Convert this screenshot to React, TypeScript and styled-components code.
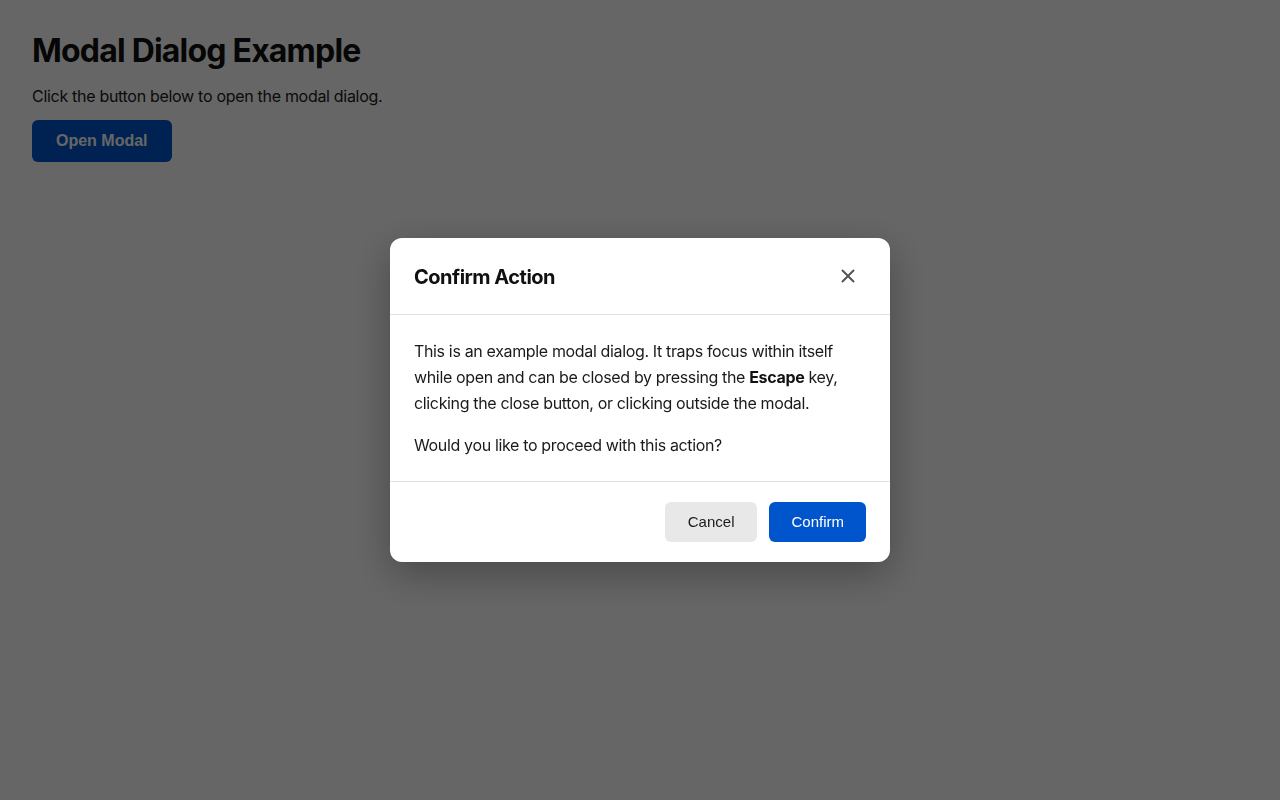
import React from "react";
import styled, { createGlobalStyle } from "styled-components";

const GlobalStyle = createGlobalStyle`
  html, body { margin: 0; padding: 0; background: #ffffff; }
  body { font-family: Inter, "Noto Sans", sans-serif; color: #111111; }
  * { box-sizing: border-box; }
`;

const Page = styled.main`
  padding: 32px;
  min-height: 800px;
`;

const Title = styled.h1`
  margin: 0 0 14px;
  font-size: 32px;
  line-height: 38px;
  font-weight: 700;
  letter-spacing: -0.8px;
  color: #111111;
`;

const Lead = styled.p`
  margin: 0 0 12px;
  font-size: 16px;
  line-height: 24px;
  letter-spacing: -0.3px;
  color: #1a1a1a;
`;

const PrimaryButton = styled.button<{ $size?: "lg" | "md" }>`
  border: none;
  border-radius: 6px;
  background: #0055cc;
  color: #ffffff;
  font-family: "Liberation Sans", Arial, sans-serif;
  cursor: pointer;
  font-size: ${(p) => (p.$size === "lg" ? "16px" : "15px")};
  font-weight: ${(p) => (p.$size === "lg" ? 700 : 400)};
  line-height: 18px;
  padding: ${(p) => (p.$size === "lg" ? "12px 24px" : "11px 22px")};
`;

const SecondaryButton = styled.button`
  border: none;
  border-radius: 6px;
  background: #e8e8e8;
  color: #1a1a1a;
  font-family: "Liberation Sans", Arial, sans-serif;
  font-size: 15px;
  line-height: 18px;
  padding: 11px 23px;
  cursor: pointer;
`;

const Overlay = styled.div`
  position: fixed;
  inset: 0;
  background: rgba(0, 0, 0, 0.6);
  display: flex;
  align-items: center;
  justify-content: center;
`;

const Dialog = styled.div`
  width: 500px;
  background: #ffffff;
  border-radius: 12px;
  box-shadow: 0 12px 40px rgba(0, 0, 0, 0.3);
  overflow: hidden;
`;

const Header = styled.header`
  display: flex;
  align-items: center;
  justify-content: space-between;
  padding: 20px 24px;
  border-bottom: 1px solid #e2e2e2;
`;

const DialogTitle = styled.h2`
  margin: 0;
  padding-top: 2px;
  font-size: 20px;
  line-height: 28px;
  font-weight: 700;
  letter-spacing: -0.5px;
  color: #111111;
`;

const CloseButton = styled.button`
  width: 36px;
  height: 36px;
  border: none;
  background: transparent;
  border-radius: 6px;
  display: flex;
  align-items: center;
  justify-content: center;
  color: #555555;
  padding: 0;
  cursor: pointer;
`;

const Body = styled.div`
  padding: 23px 24px;
  border-bottom: 1px solid #e2e2e2;
`;

const BodyText = styled.p`
  margin: 0 0 16px;
  font-size: 16px;
  line-height: 26px;
  letter-spacing: -0.35px;
  color: #1a1a1a;
  &:last-child { margin-bottom: 0; }
  strong { font-weight: 700; color: #111111; }
`;

const Footer = styled.footer`
  display: flex;
  justify-content: flex-end;
  gap: 12px;
  padding: 20px 24px;
`;

export default function App() {
  return (
    <>
      <GlobalStyle />
      <Page>
        <Title>Modal Dialog Example</Title>
        <Lead>Click the button below to open the modal dialog.</Lead>
        <PrimaryButton $size="lg">Open Modal</PrimaryButton>
      </Page>
      <Overlay>
        <Dialog role="dialog" aria-modal="true" aria-labelledby="dlg-title">
          <Header>
            <DialogTitle id="dlg-title">Confirm Action</DialogTitle>
            <CloseButton aria-label="Close">
              <svg width="14" height="14" viewBox="0 0 14 14" fill="none">
                <path d="M1.5 1.5 L12.5 12.5 M12.5 1.5 L1.5 12.5" stroke="currentColor" strokeWidth="2" strokeLinecap="round" />
              </svg>
            </CloseButton>
          </Header>
          <Body>
            <BodyText>
              This is an example modal dialog. It traps focus within itself while open and can be closed by
              pressing the <strong>Escape</strong> key, clicking the close button, or clicking outside the modal.
            </BodyText>
            <BodyText>Would you like to proceed with this action?</BodyText>
          </Body>
          <Footer>
            <SecondaryButton>Cancel</SecondaryButton>
            <PrimaryButton $size="md">Confirm</PrimaryButton>
          </Footer>
        </Dialog>
      </Overlay>
    </>
  );
}
